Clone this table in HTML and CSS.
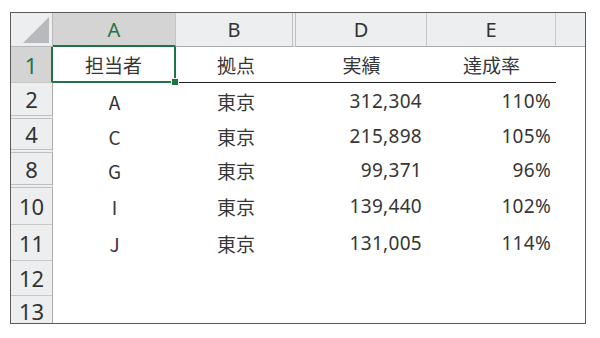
FILE: index.html
```html
<!DOCTYPE html>
<html lang="ja">
<head>
<meta charset="utf-8">
<link rel="stylesheet" href="styles.css">
</head>
<body>
<div class="sheet">
  <div class="corner"><span class="tri"></span></div>
  <div class="colhead sel">A</div>
  <div class="colhead hid">B</div>
  <div class="colhead">D</div>
  <div class="colhead">E</div>
  <div class="colhead last"></div>

  <div class="rowhead sel">1</div>
  <div class="cell center active">担当者<span class="handle"></span></div>
  <div class="cell center under">拠点</div>
  <div class="cell center under">実績</div>
  <div class="cell center under">達成率</div>
  <div class="cell"></div>

  <div class="rowhead hid">2</div>
  <div class="cell center">A</div>
  <div class="cell center">東京</div>
  <div class="cell num">312,304</div>
  <div class="cell num">110%</div>
  <div class="cell"></div>

  <div class="rowhead hid">4</div>
  <div class="cell center">C</div>
  <div class="cell center">東京</div>
  <div class="cell num">215,898</div>
  <div class="cell num">105%</div>
  <div class="cell"></div>

  <div class="rowhead hid">8</div>
  <div class="cell center">G</div>
  <div class="cell center">東京</div>
  <div class="cell num">99,371</div>
  <div class="cell num">96%</div>
  <div class="cell"></div>

  <div class="rowhead">10</div>
  <div class="cell center">I</div>
  <div class="cell center">東京</div>
  <div class="cell num">139,440</div>
  <div class="cell num">102%</div>
  <div class="cell"></div>

  <div class="rowhead">11</div>
  <div class="cell center">J</div>
  <div class="cell center">東京</div>
  <div class="cell num">131,005</div>
  <div class="cell num">114%</div>
  <div class="cell"></div>

  <div class="rowhead">12</div>
  <div class="cell"></div>
  <div class="cell"></div>
  <div class="cell"></div>
  <div class="cell"></div>
  <div class="cell"></div>

  <div class="rowhead lastrow">13</div>
  <div class="cell"></div>
  <div class="cell"></div>
  <div class="cell"></div>
  <div class="cell"></div>
  <div class="cell"></div>
</div>
</body>
</html>
```

FILE: styles.css
```css
html, body {
  margin: 0;
  padding: 0;
  background: #ffffff;
}
body {
  width: 600px;
  height: 338px;
  overflow: hidden;
  font-family: "Noto Sans CJK JP", "Noto Sans", sans-serif;
  color: #333333;
}
.sheet {
  box-sizing: border-box;
  margin: 12px 0 0 10px;
  width: 576px;
  height: 312px;
  border: 1px solid #5a5a5a;
  display: grid;
  grid-template-columns: 42px 123px 120px 131px 129px 1fr;
  grid-template-rows: 34px 36px 36px 34px 35px 37px 36px 35px 1fr;
  overflow: hidden;
}
.corner {
  position: relative;
  box-sizing: border-box;
  background: #eceef0;
  border-right: 1px solid #b8b8b8;
  border-bottom: 1px solid #b8b8b8;
}
.tri {
  position: absolute;
  right: 3px;
  bottom: 3px;
  width: 0;
  height: 0;
  border-left: 26px solid transparent;
  border-bottom: 26px solid #b7b9bc;
}
.colhead {
  box-sizing: border-box;
  background: #eceef0;
  border-right: 1px solid #c6c6c6;
  border-bottom: 1px solid #aaaaaa;
  display: flex;
  align-items: center;
  justify-content: center;
  font-size: 20px;
  line-height: 1;
  font-family: "Noto Sans", sans-serif;
  color: #333;
  padding-top: 1px;
}
.colhead.hid {
  border-right: 4px double #c0c0c0;
}
.colhead.sel {
  background: #d4d4d4;
  color: #217346;
  border-bottom: 2px solid #217346;
}
.colhead.last {
  border-right: none;
}
.rowhead {
  box-sizing: border-box;
  background: #eceef0;
  border-right: 1px solid #aaaaaa;
  border-bottom: 1px solid #c6c6c6;
  display: flex;
  align-items: center;
  justify-content: center;
  font-size: 22px;
  line-height: 1;
  font-family: "Noto Sans", sans-serif;
  color: #333;
}
.rowhead.hid {
  border-bottom: 4px double #c0c0c0;
}
.rowhead.sel {
  background: #d4d4d4;
  color: #217346;
  border-right: 2px solid #217346;
}
.rowhead.lastrow {
  border-bottom: none;
  padding-top: 2px;
}
.cell {
  box-sizing: border-box;
  display: flex;
  align-items: center;
  font-size: 19px;
  line-height: 1;
  color: #363636;
  white-space: nowrap;
}
.center {
  justify-content: center;
}
.num {
  justify-content: flex-end;
  padding-right: 5px;
  font-family: "Noto Sans", sans-serif;
  font-size: 19px;
  letter-spacing: 0.3px;
}
.under {
  border-bottom: 1px solid #222222;
}
.active {
  position: relative;
  border: 2px solid #217346;
  border-left: none;
  border-top: none;
}
.handle {
  position: absolute;
  right: -5px;
  bottom: -5px;
  width: 6px;
  height: 6px;
  background: #217346;
  border: 1px solid #ffffff;
}
```
